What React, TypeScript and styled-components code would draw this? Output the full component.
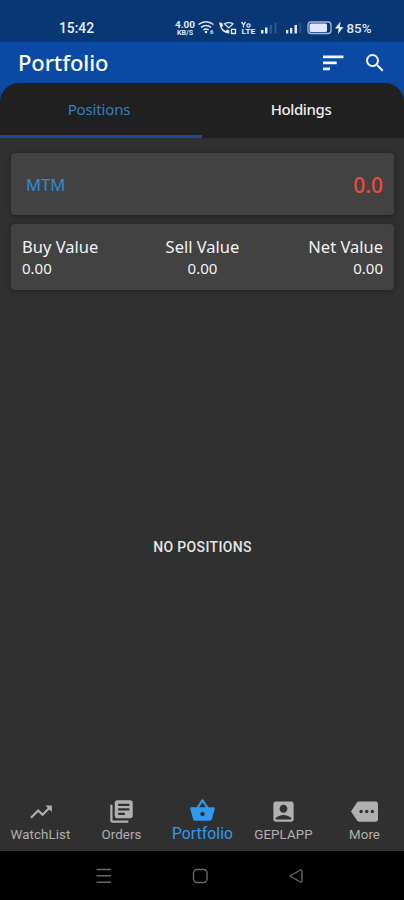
import React from "react";
import styled, { createGlobalStyle } from "styled-components";
import {
  MdSearch,
  MdTrendingUp,
  MdLibraryBooks,
  MdShoppingBasket,
  MdAccountBox,
  MdMore,
} from "react-icons/md";

const Global = createGlobalStyle`
  * { box-sizing: border-box; }
  body { margin: 0; background: #303030; }
`;

const Screen = styled.div`
  width: 404px;
  height: 900px;
  display: flex;
  flex-direction: column;
  overflow: hidden;
  background: #303030;
  color: #f2f2f2;
  font-family: "Noto Sans", "Open Sans", sans-serif;
  white-space: nowrap;
`;

const StatusBar = styled.div`
  flex: none;
  height: 42px;
  padding: 14px 32px 0 59px;
  display: flex;
  justify-content: space-between;
  background: #083776;
`;

const Clock = styled.span`
  font: 500 13.8px/28px Roboto, sans-serif;
  height: 28px;
  color: #e9effa;
`;

const StatusIcons = styled.svg`
  display: block;
  margin-top: 4px;
`;

const Header = styled.header`
  flex: none;
  height: 41px;
  display: flex;
  align-items: center;
  padding: 0 17px 0 18px;
  background: #0a4aa4;
`;

const Title = styled.h1`
  margin: 0;
  flex: 1;
  font-size: 22px;
  line-height: 41px;
  font-weight: 500;
  letter-spacing: -0.1px;
  color: #ffffff;
`;

const Actions = styled.div`
  display: flex;
  align-items: center;
  gap: 19px;
  color: #f4f7ff;

  svg {
    display: block;
  }
`;

const TabsBackdrop = styled.div`
  flex: none;
  background: #0a4aa4;
`;

const Tabs = styled.nav`
  height: 55px;
  display: flex;
  background: #202020;
  border-radius: 19px 19px 0 0;
  overflow: hidden;
`;

const Tab = styled.div<{ $active?: boolean }>`
  flex: 1 1 0;
  text-align: center;
  font-size: 15px;
  line-height: 53px;
  letter-spacing: ${(p) => (p.$active ? -0.15 : -0.4)}px;
  padding-right: 4px;
  font-weight: ${(p) => (p.$active ? 400 : 500)};
  color: ${(p) => (p.$active ? "#3280c3" : "#eeeeee")};
  border-bottom: 3px solid ${(p) => (p.$active ? "#164f98" : "transparent")};
`;

const Content = styled.main`
  flex: 1;
  display: flex;
  flex-direction: column;
  gap: 9px;
  padding: 15px 10px 0 11px;
`;

const Card = styled.section<{ $height: number }>`
  flex: none;
  height: ${(p) => p.$height}px;
  background: #424242;
  border-radius: 4px;
  box-shadow: 0 1px 5px rgba(0, 0, 0, 0.35);
`;

const MtmCard = styled(Card)`
  display: flex;
  justify-content: space-between;
  align-items: center;
  padding: 1px 11px 0 15px;
`;

const MtmLabel = styled.span`
  font-size: 16.6px;
  color: #338bd0;
`;

const MtmValue = styled.span`
  font-size: 21px;
  font-weight: 500;
  color: #ee493d;
`;

const ValuesCard = styled(Card)`
  display: grid;
  grid-template-columns: 1fr 1fr 1fr;
  padding: 12px 11px 0;
`;

const ValueCell = styled.div<{ $align: "left" | "center" | "right" }>`
  text-align: ${(p) => p.$align};
`;

const ValueName = styled.div`
  font-size: 16.5px;
  line-height: 22px;
`;

const ValueAmount = styled.div`
  font-size: 15px;
  line-height: 21px;
`;

const Empty = styled.div`
  flex: 1;
  display: flex;
  align-items: center;
  justify-content: center;
  padding-top: 5px;
  font: 500 14px/20px Roboto, sans-serif;
  letter-spacing: 0.35px;
  color: #e6e6e6;
`;

const BottomNav = styled.nav`
  flex: none;
  height: 61px;
  display: grid;
  grid-template-columns: repeat(5, 81px);
  background: #303030;
`;

const NavItem = styled.div<{ $active?: boolean }>`
  display: flex;
  flex-direction: column;
  align-items: center;
  padding-top: ${(p) => (p.$active ? 7 : 8)}px;
  color: ${(p) => (p.$active ? "#2f9af2" : "#b0b0b0")};
`;

const IconSlot = styled.span`
  height: 27px;
  display: flex;
  align-items: center;
`;

const NavLabel = styled.span<{ $active?: boolean }>`
  margin-top: ${(p) => (p.$active ? 1 : 0.5)}px;
  font: 400 ${(p) => (p.$active ? 15.6 : 13.3)}px/18px Roboto, sans-serif;
  letter-spacing: 0.1px;
`;

const SystemNav = styled.footer`
  flex: none;
  height: 49px;
  background: #000000;
`;

const navItems = [
  { label: "WatchList", Icon: MdTrendingUp, size: 26 },
  { label: "Orders", Icon: MdLibraryBooks, size: 27 },
  { label: "Portfolio", Icon: MdShoppingBasket, size: 27, active: true },
  { label: "GEPLAPP", Icon: MdAccountBox, size: 27 },
  { label: "More", Icon: MdMore, size: 27 },
];

const totals = [
  { name: "Buy Value", align: "left" as const },
  { name: "Sell Value", align: "center" as const },
  { name: "Net Value", align: "right" as const },
];

function SortIcon() {
  return (
    <svg width="21" height="16" viewBox="0 0 21 16" fill="currentColor">
      <path d="M0 .5h20.500v2.700H0zM0 6.500h13.700v2.700H0zM0 12.500h7v2.700H0z" />
    </svg>
  );
}

function StatusGlyphs() {
  return (
    <StatusIcons width="198" height="20" viewBox="174 18 198 20" fill="#dfe8f8" fontFamily="Roboto, sans-serif">
      <text x="175" y="28" fontSize="9.500" fontWeight="700" textLength="20" lengthAdjust="spacingAndGlyphs">4.00</text>
      <text x="177" y="34.500" fontSize="6.500" fontWeight="700" textLength="16" lengthAdjust="spacingAndGlyphs">KB/S</text>
      <g fill="none" stroke="#dfe8f8" strokeWidth="1.500">
        <path d="M198.500 24.500q7.500-5.500 15 0" />
        <path d="M201 27.300q5-3.800 10 0" />
        <path d="M203.300 30q2.700-2 5.400 0" />
      </g>
      <circle cx="206" cy="32" r="1.300" />
      <text x="210" y="34" fontSize="6" fontWeight="700">6</text>
      <path d="M219 22.500l3 .2 1.300 3-1.800 1.400q1.500 2.800 4 4l1.600-1.600 2.200 1v3q-9-.4-10.300-11z" />
      <path d="M224.500 23.800q4.500-2.400 8.500 0l-4.200 4.200z" fill="none" stroke="#dfe8f8" strokeWidth="1.200" />
      <path d="M231.500 33.500v-4.200h4v4.200z" fill="none" stroke="#dfe8f8" strokeWidth="1.300" />
      <path d="M241.500 22l2 2.800 2-2.800M243.500 24.800v2.700" fill="none" stroke="#dfe8f8" strokeWidth="1.300" />
      <circle cx="248.500" cy="25.500" r="1.700" fill="none" stroke="#dfe8f8" strokeWidth="1.200" />
      <text x="241.500" y="34" fontSize="6.500" fontWeight="700" textLength="14" lengthAdjust="spacingAndGlyphs">LTE</text>
      <path d="M261 30h2.500v3.500H261zM265 27.500h2.500v6H265z" />
      <path d="M269.500 25h2.500v8.500h-2.500zM274.500 22.500h2v11h-2z" opacity=".18" />
      <path d="M286 30h2.300v3.500H286zM290 28h2.300v5.500H290zM294.500 25h2.500v8.500h-2.500z" />
      <path d="M299.500 22.500h1.800v11h-1.800z" opacity=".18" />
      <rect x="308" y="22" width="23" height="11.500" rx="3" fill="none" stroke="#aabbd8" strokeWidth="1.300" />
      <rect x="309.500" y="23.500" width="17.500" height="8.500" rx="1.500" />
      <path d="M340.500 21.500l-5.500 7h3.500l-.5 5.500 5.500-7h-3.500z" />
      <text x="346.500" y="32.500" fontSize="13" fontWeight="500" textLength="25" lengthAdjust="spacingAndGlyphs">85%</text>
    </StatusIcons>
  );
}

export default function App() {
  return (
    <Screen>
      <Global />
      <StatusBar>
        <Clock>15:42</Clock>
        <StatusGlyphs />
      </StatusBar>
      <Header>
        <Title>Portfolio</Title>
        <Actions>
          <SortIcon />
          <MdSearch size={24} />
        </Actions>
      </Header>
      <TabsBackdrop>
        <Tabs>
          <Tab $active>Positions</Tab>
          <Tab>Holdings</Tab>
        </Tabs>
      </TabsBackdrop>
      <Content>
        <MtmCard $height={62}>
          <MtmLabel>MTM</MtmLabel>
          <MtmValue>0.0</MtmValue>
        </MtmCard>
        <ValuesCard $height={66}>
          {totals.map((t) => (
            <ValueCell key={t.name} $align={t.align}>
              <ValueName>{t.name}</ValueName>
              <ValueAmount>0.00</ValueAmount>
            </ValueCell>
          ))}
        </ValuesCard>
        <Empty>NO POSITIONS</Empty>
      </Content>
      <BottomNav>
        {navItems.map(({ label, Icon, size, active }) => (
          <NavItem key={label} $active={active}>
            <IconSlot>
              <Icon size={size} />
            </IconSlot>
            <NavLabel $active={active}>{label}</NavLabel>
          </NavItem>
        ))}
      </BottomNav>
      <SystemNav>
        <svg width="404" height="49" viewBox="0 0 404 49" fill="none" stroke="#686868" strokeWidth="1.400">
          <path d="M96.500 18.500h14.500M96.500 24.800h14.500M96.500 31.200h14.500" />
          <rect x="193.500" y="18.500" width="13.500" height="13" rx="3.500" />
          <path d="M290 25l10.500-6q1.500-.5 1.500 1v10q0 1.500-1.500 1z" strokeLinejoin="round" />
        </svg>
      </SystemNav>
    </Screen>
  );
}
